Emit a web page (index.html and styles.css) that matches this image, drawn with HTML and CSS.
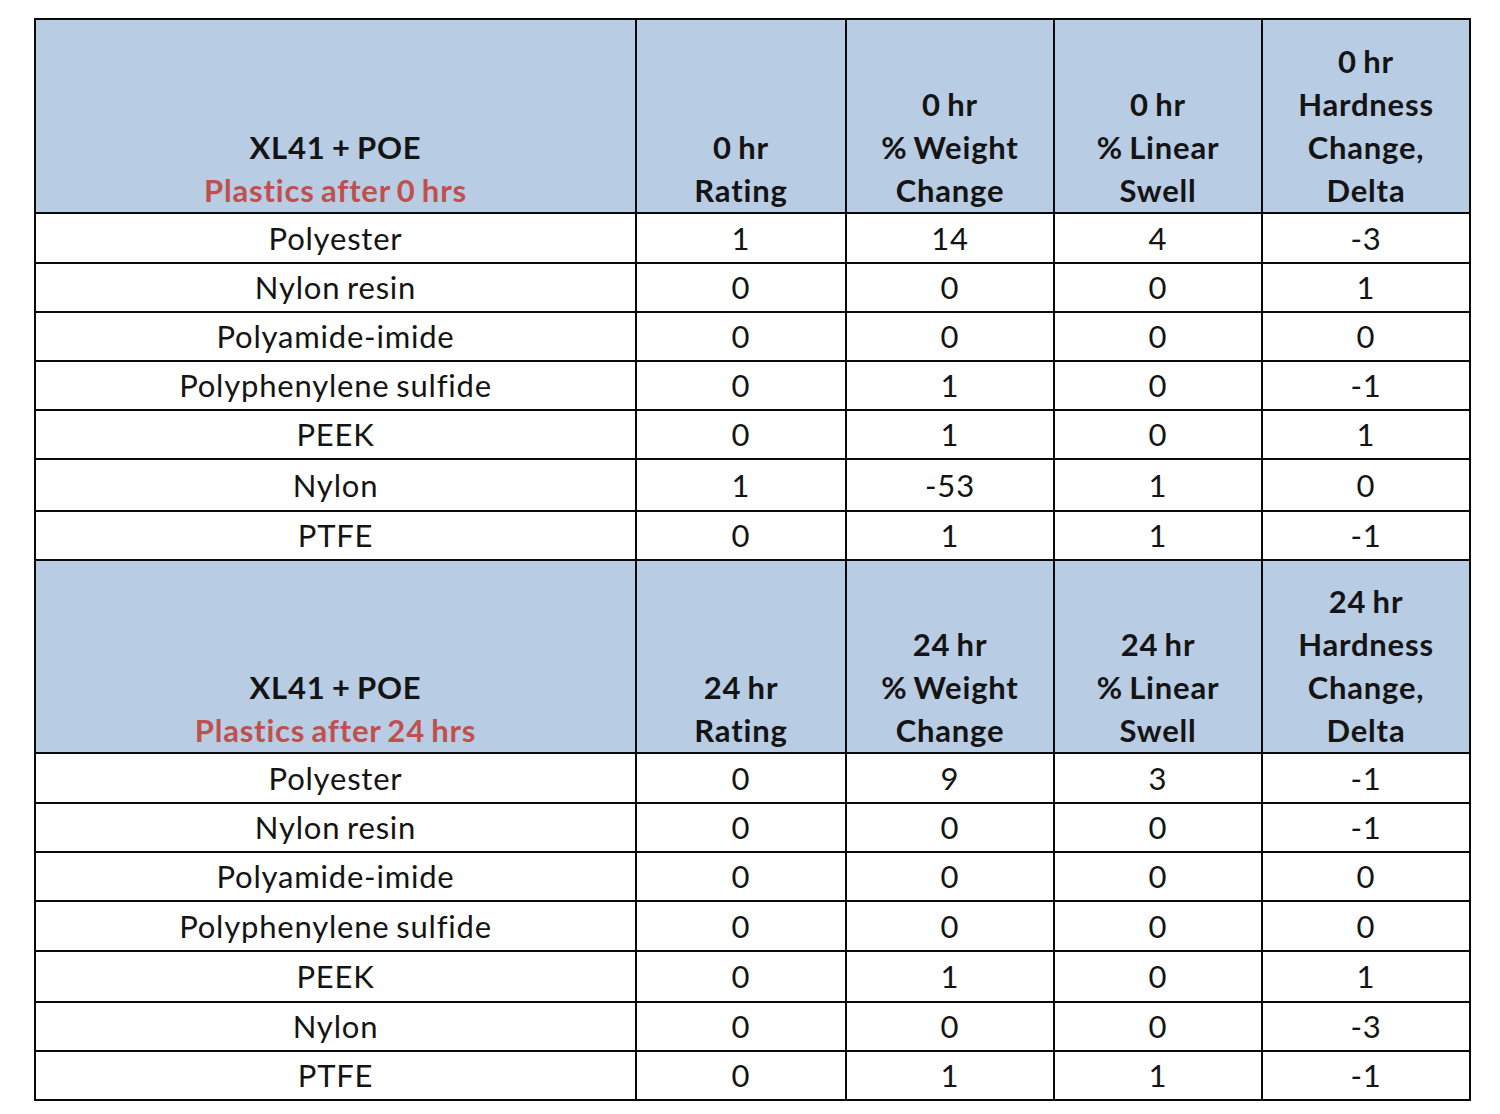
FILE: index.html
```html
<!DOCTYPE html>
<html>
<head>
<meta charset="utf-8">
<link rel="stylesheet" href="styles.css">
</head>
<body>
<table class="grid">
  <colgroup>
    <col class="c-name">
    <col class="c-rate">
    <col class="c-num">
    <col class="c-num">
    <col class="c-num">
  </colgroup>
  <tbody>
    <tr class="head">
      <th>XL41 + POE<br><span class="red">Plastics after 0 hrs</span></th>
      <th>0 hr<br>Rating</th>
      <th>0 hr<br>% Weight<br>Change</th>
      <th>0 hr<br>% Linear<br>Swell</th>
      <th>0 hr<br>Hardness<br>Change,<br>Delta</th>
    </tr>
    <tr class="row r50"><td>Polyester</td><td>1</td><td>14</td><td>4</td><td>-3</td></tr>
    <tr class="row"><td>Nylon resin</td><td>0</td><td>0</td><td>0</td><td>1</td></tr>
    <tr class="row"><td>Polyamide-imide</td><td>0</td><td>0</td><td>0</td><td>0</td></tr>
    <tr class="row"><td>Polyphenylene sulfide</td><td>0</td><td>1</td><td>0</td><td>-1</td></tr>
    <tr class="row"><td>PEEK</td><td>0</td><td>1</td><td>0</td><td>1</td></tr>
    <tr class="row r52"><td>Nylon</td><td>1</td><td>-53</td><td>1</td><td>0</td></tr>
    <tr class="row"><td>PTFE</td><td>0</td><td>1</td><td>1</td><td>-1</td></tr>
    <tr class="head head2">
      <th>XL41 + POE<br><span class="red">Plastics after 24 hrs</span></th>
      <th>24 hr<br>Rating</th>
      <th>24 hr<br>% Weight<br>Change</th>
      <th>24 hr<br>% Linear<br>Swell</th>
      <th>24 hr<br>Hardness<br>Change,<br>Delta</th>
    </tr>
    <tr class="row r50"><td>Polyester</td><td>0</td><td>9</td><td>3</td><td>-1</td></tr>
    <tr class="row"><td>Nylon resin</td><td>0</td><td>0</td><td>0</td><td>-1</td></tr>
    <tr class="row"><td>Polyamide-imide</td><td>0</td><td>0</td><td>0</td><td>0</td></tr>
    <tr class="row r50"><td>Polyphenylene sulfide</td><td>0</td><td>0</td><td>0</td><td>0</td></tr>
    <tr class="row r51"><td>PEEK</td><td>0</td><td>1</td><td>0</td><td>1</td></tr>
    <tr class="row"><td>Nylon</td><td>0</td><td>0</td><td>0</td><td>-3</td></tr>
    <tr class="row"><td>PTFE</td><td>0</td><td>1</td><td>1</td><td>-1</td></tr>
  </tbody>
</table>
</body>
</html>
```

FILE: styles.css
```css
html, body {
  margin: 0;
  padding: 0;
  background: #ffffff;
}

body {
  padding: 18px 0 0 34px;
  font-family: Lato, "Open Sans", "Liberation Sans", sans-serif;
  color: #141414;
}

.grid {
  border-collapse: collapse;
  table-layout: fixed;
  width: 1435px;
  font-size: 31px;
  letter-spacing: 0.8px;
  word-spacing: -2px;
}

.c-name { width: 601px; }
.c-rate { width: 210px; }
.c-num { width: 208px; }

.grid th,
.grid td {
  border: 2px solid #0a0a0a;
  padding: 0;
  text-align: center;
}

.head th {
  background: #b8cce4;
  font-weight: 700;
  line-height: 43px;
  vertical-align: bottom;
  height: 192px;
}

.head2 th {
  height: 191px;
}

.red {
  color: #c0504d;
}

.row td {
  height: 47px;
  line-height: 47px;
  vertical-align: middle;
  font-weight: 400;
}

.row.r50 td { height: 48px; }
.row.r51 td { height: 49px; }
.row.r52 td { height: 50px; }
```
